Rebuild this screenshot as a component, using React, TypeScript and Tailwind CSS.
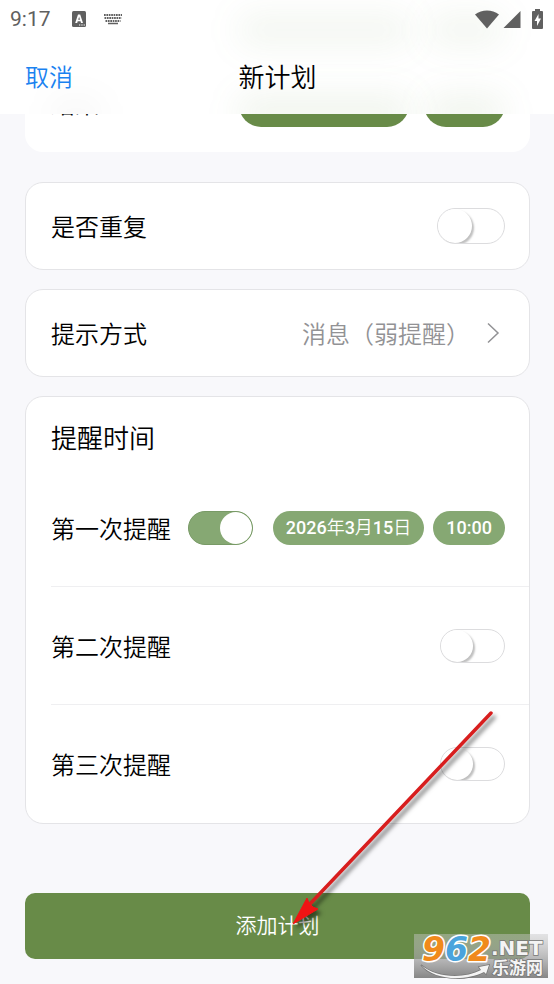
import React, { useState } from 'react';

const switchBase =
  "relative shrink-0 appearance-none cursor-pointer overflow-hidden rounded-full border border-[#dcdcde] bg-white before:absolute before:left-0 before:top-0 before:rounded-full before:bg-white before:shadow-[2px_2px_2px_rgba(0,0,0,0.25)] before:content-['']";

const switchSizes = {
  lg: "w-17 h-9 before:size-[34px]",
  sm: "w-[65px] h-[34px] before:size-8",
};

function Switch({ id, size = 'sm', checked, onChange }: {
  id: string;
  size?: 'sm' | 'lg';
  checked: boolean;
  onChange: (value: boolean) => void;
}) {
  return (
    <input
      id={id}
      type="checkbox"
      role="switch"
      checked={checked}
      onChange={(e) => onChange(e.target.checked)}
      className={`${switchBase} ${switchSizes[size]} checked:border-[#789a66] checked:bg-[#86a873] checked:before:left-auto checked:before:right-0 checked:before:shadow-none`}
    />
  );
}

function StatusBar() {
  return (
    <div className="relative flex h-[38px] items-center pl-[10px] pr-[11px] text-[#606060]">
      <span className="font-[Roboto] text-[21px] font-normal leading-6">9:17</span>
      <svg className="ml-5" width="16" height="16" viewBox="0 0 16 16">
        <rect x="1" y="0" width="14" height="16" rx="1.5" fill="currentColor" />
        <path d="M4.2 12 7 3.6h2.2L12 12h-2l-.5-1.7H6.700L6.200 12zM7.200 8.700h1.800L8.100 5.700z" fill="#fff" />
        <path d="M8 13.500h1.300v1H8zM10.300 13.500h1.300v1h-1.300zM12.600 13.500h1.300v1h-1.300z" fill="#fff" />
      </svg>
      <svg className="ml-4" width="20" height="12" viewBox="0 0 20 12">
        <path d="M1 2h18M1.500 5h17M2.500 8h15" stroke="currentColor" strokeWidth="1.800" strokeDasharray="1.700 .7" />
        <path d="M5 10.500h10" stroke="currentColor" strokeWidth="1.500" />
      </svg>
      <div className="ml-auto flex items-center">
        <svg width="26" height="20" viewBox="0 0 26 20">
          <path d="M1 5.500C8 0 18 0 25 5.500L13 19.500z" fill="currentColor" />
        </svg>
        <svg className="ml-[3px]" width="18" height="18" viewBox="0 0 18 18">
          <path d="M17.500 1v17H.5z" fill="currentColor" />
        </svg>
        <svg className="ml-[11px]" width="11" height="20" viewBox="0 0 11 20">
          <path d="M3 0h5v2h2a1 1 0 0 1 1 1v16a1 1 0 0 1-1 1H1a1 1 0 0 1-1-1V3a1 1 0 0 1 1-1h2z" fill="currentColor" />
          <path d="M6.500 5 2.500 12h2.500v5l4-7.500H6.500z" fill="#fff" />
        </svg>
      </div>
    </div>
  );
}

function Header() {
  return (
    <header className="relative h-[114px] overflow-hidden bg-white">
      {/* Frosted traces of the rows scrolled under the header */}
      <div className="absolute left-[236px] right-[142px] top-3 h-9 rounded-full bg-[#688b48]/7 blur-lg" />
      <div className="absolute right-12 top-3 h-9 w-20 rounded-full bg-[#688b48]/7 blur-lg" />
      <div className="absolute -bottom-4 left-[236px] right-[142px] h-9 rounded-full bg-[#688b48]/9 blur-lg" />
      <div className="absolute -bottom-4 right-12 h-9 w-20 rounded-full bg-[#688b48]/9 blur-lg" />
      <div className="absolute -bottom-4 left-12 h-8 w-14 rounded-full bg-black/3 blur-lg" />
      <StatusBar />
      <div className="relative grid h-[76px] grid-cols-3 items-center pl-[25px] pr-6">
        <button className="justify-self-start text-[24px] leading-8 text-[#1a82f0]">取消</button>
        <h1 className="justify-self-center text-[26px] leading-8">新计划</h1>
      </div>
    </header>
  );
}

const cardClass = "rounded-[18px] border border-[#e4e4e7] bg-white";

// Digits are set heavier than the 年 / 月 / 日 between them
function Pill({ text }: { text: string }) {
  return (
    <button className="h-[34px] rounded-full bg-[#86a873] px-[13px] leading-[34px]">
      {text.split(/([年月日])/).map((part, i) => (
        <span key={i} className={/[年月日]/.test(part) ? 'font-[350]' : 'font-medium'}>{part}</span>
      ))}
    </button>
  );
}

function Watermark() {
  return (
    <svg className="absolute bottom-[6px] right-[6px] overflow-visible" width="134" height="44" viewBox="0 0 134 44">
      <defs>
        <linearGradient id="plate" x1="0" y1="0" x2="0" y2="1">
          <stop offset="0" stopColor="#c8c8c8" stopOpacity=".45" />
          <stop offset="1" stopColor="#808080" stopOpacity=".95" />
        </linearGradient>
      </defs>
      <rect width="134" height="44" fill="url(#plate)" />
      <text x="8" y="27" fontFamily="DejaVu Sans" fontWeight="700" fontStyle="italic" fontSize="33" fill="#f08a1c" stroke="#fff" strokeWidth="3" strokeLinejoin="round" paintOrder="stroke">
        9<tspan fill="#4aa3dc">6</tspan>2
      </text>
      <g fill="#f4f4f4" stroke="#777" strokeWidth="1.500" paintOrder="stroke">
        <text x="77" y="21" fontFamily="DejaVu Sans" fontWeight="700" fontSize="20">.NET</text>
        <text x="78" y="40" fontFamily="Noto Sans CJK SC" fontWeight="700" fontSize="17">乐游网</text>
        <path d="M7 31C22 44 50 45 67 36l-2-3 10-2-3 9-2-2C50 48 20 46 7 31z" />
      </g>
    </svg>
  );
}

export default function App() {
  const [repeat, setRepeat] = useState(false);
  const [reminders, setReminders] = useState([
    { label: '第一次提醒', on: true, date: '2026年3月15日', time: '10:00' },
    { label: '第二次提醒', on: false, date: '2026年3月15日', time: '10:00' },
    { label: '第三次提醒', on: false, date: '2026年3月15日', time: '10:00' },
  ]);

  const toggleReminder = (index: number, on: boolean) => {
    setReminders(reminders.map((r, i) => (i === index ? { ...r, on } : r)));
  };

  return (
    <div className="relative min-h-screen bg-[#f8f8fb] font-['Noto_Sans_CJK_SC',sans-serif] text-[24px] leading-9 font-[350] text-black">
      <Header />

      <main className="pb-[25px] pl-[25px] pr-6">
        {/* End time row, mostly scrolled away */}
        <div className="flex h-[38px] flex-col justify-end overflow-hidden">
          <div className="flex shrink-0 items-center rounded-b-[18px] bg-white pb-[25px] pl-[26px] pr-[25px]">
            <span className="pb-1">结束</span>
            <span className="ml-auto h-11 w-[170px] rounded-full bg-[#688b48]" />
            <span className="ml-[15px] h-11 w-[81px] rounded-full bg-[#688b48]" />
          </div>
        </div>

        <section className={`${cardClass} mt-[30px] flex h-[88px] items-center justify-between pl-[25px] pr-6`}>
          <label htmlFor="repeat">是否重复</label>
          <Switch id="repeat" size="lg" checked={repeat} onChange={setRepeat} />
        </section>

        <button className={`${cardClass} mt-[19px] flex h-[88px] w-full items-center pl-[25px] pr-6 text-left`}>
          <span>提示方式</span>
          <span className="ml-auto text-[#929295]">消息（弱提醒）</span>
          <svg className="ml-4 mr-[5px]" width="14" height="22" viewBox="0 0 14 22" fill="none" stroke="#929295" strokeWidth="1.500">
            <path d="M2 1.500 12 11 2 20.500" />
          </svg>
        </button>

        <section className={`${cardClass} mt-[19px] pl-[25px]`}>
          <h2 className="pb-[14px] pt-[22px] text-[26px] leading-9">提醒时间</h2>
          {reminders.map((r, i) => (
            <div key={r.label} className="flex h-[118px] items-center border-b border-[#efeff1] pr-6 last:border-b-0">
              <label htmlFor={`reminder-${i}`} className={r.on ? 'mr-[17px]' : 'mr-auto'}>{r.label}</label>
              <Switch id={`reminder-${i}`} checked={r.on} onChange={(on) => toggleReminder(i, on)} />
              {r.on && (
                <div className="ml-auto flex gap-[9px] font-[Roboto,'Noto_Sans_CJK_SC',sans-serif] text-[18px] text-white">
                  <Pill text={r.date} />
                  <Pill text={r.time} />
                </div>
              )}
            </div>
          ))}
        </section>

        <button className="mt-[69px] h-[66px] w-full rounded-[10px] bg-[#688b48] pb-1 text-[21px] text-white">添加计划</button>
      </main>

      {/* Pointer towards the submit button */}
      <svg className="pointer-events-none absolute bottom-[61px] right-[62px] overflow-visible" width="198" height="211" viewBox="0 0 198 211" style={{ filter: 'drop-shadow(3px 4px 2px rgba(0,0,0,.5))' }}>
        <path d="M197 1 15 193" stroke="#d81e1e" strokeWidth="3.500" strokeLinecap="round" />
        <path d="M-1 212 13 186 15 191 19 195 24 197z" fill="#f01414" stroke="#f01414" strokeWidth="1" />
      </svg>
      <Watermark />
    </div>
  );
}
